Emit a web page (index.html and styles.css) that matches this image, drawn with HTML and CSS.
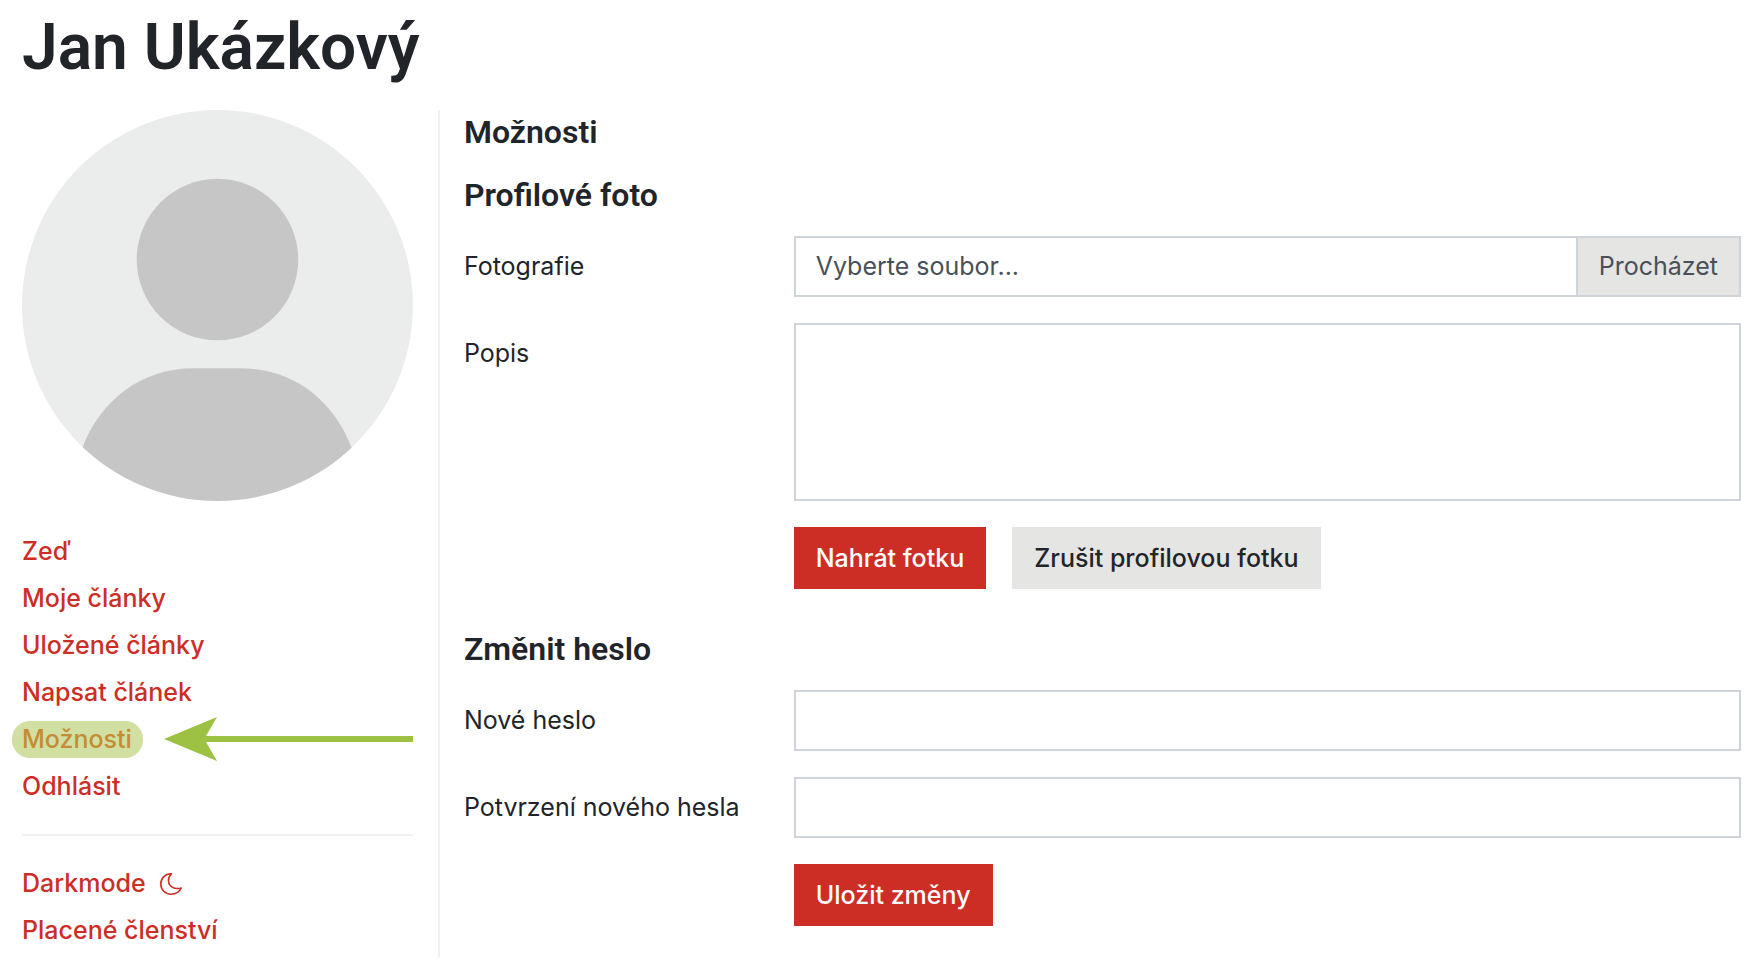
FILE: index.html
```
<!DOCTYPE html>
<html lang="cs">
<head>
    <meta charset="UTF-8">
    <meta name="viewport" content="width=device-width, initial-scale=1.0">
    <title>Jan Ukázkový</title>
    <link rel="stylesheet" href="styles.css">
</head>
<body>
    <h1>Jan Ukázkový</h1>

    <div class="profile">
        <aside class="sidebar">
            <svg class="avatar" viewBox="0 0 392 392" aria-hidden="true">
                <clipPath id="avatarClip"><circle cx="196" cy="196" r="196"/></clipPath>
                <g clip-path="url(#avatarClip)">
                    <rect width="392" height="392" fill="#ebedec"/>
                    <circle cx="196" cy="150" r="81" fill="#c6c6c6"/>
                    <path d="M60 340C78 291 120 259 172 259H220C272 259 313 291 331 340V392H60Z" fill="#c6c6c6"/>
                </g>
            </svg>

            <ul class="menu">
                <li><a href="#">Zeď</a></li>
                <li><a href="#">Moje články</a></li>
                <li><a href="#">Uložené články</a></li>
                <li><a href="#">Napsat článek</a></li>
                <li>
                    <a href="#" class="active">Možnosti</a>
                    <span class="arrow">
                        <svg width="53" height="44" viewBox="0 0 53 44" aria-hidden="true">
                            <path d="M0 22L53 0L42 19H53V25H42L53 44Z" fill="#9dc142"/>
                        </svg>
                        <span class="arrow-line"></span>
                    </span>
                </li>
                <li><a href="#">Odhlásit</a></li>
            </ul>
            <hr>
            <ul class="menu">
                <li>
                    <a href="#">Darkmode
                        <svg class="moon" width="22" height="22" viewBox="0 0 22 22" aria-hidden="true">
                            <path d="M11.5 .8C5.3 .5 .8 5.2 .8 11C.8 16.8 5.4 21.2 11 21.2C15.5 21.2 19.5 18.8 21.2 15C14 17 8.5 13 8.5 7.5C8.5 4.8 9.6 2.3 11.5 .8Z" fill="none" stroke="currentColor" stroke-width="1.6" stroke-linejoin="round"/>
                        </svg>
                    </a>
                </li>
                <li><a href="#">Placené členství</a></li>
            </ul>
        </aside>

        <main class="content">
            <h2>Možnosti</h2>

            <h2>Profilové foto</h2>
            <form class="form">
                <label for="photo">Fotografie</label>
                <div class="file">
                    <input type="file" id="photo" name="photo" accept="image/*">
                    <span class="file-name">Vyberte soubor...</span>
                    <span class="file-browse">Procházet</span>
                </div>
                <label for="description">Popis</label>
                <textarea id="description" name="description"></textarea>
                <div class="buttons">
                    <button type="submit" class="btn btn-primary">Nahrát fotku</button>
                    <button type="button" class="btn">Zrušit profilovou fotku</button>
                </div>
            </form>

            <h2>Změnit heslo</h2>
            <form class="form">
                <label for="password">Nové heslo</label>
                <input type="password" id="password" name="password">
                <label for="passwordConfirm">Potvrzení nového hesla</label>
                <input type="password" id="passwordConfirm" name="passwordConfirm">
                <div class="buttons">
                    <button type="submit" class="btn btn-primary">Uložit změny</button>
                </div>
            </form>
        </main>
    </div>
</body>
</html>
```
FILE: styles.css
```
* {
    box-sizing: border-box;
}
body {
    margin: 0;
    padding: 9px 15px 12px 22px;
    font-family: Inter, sans-serif;
    font-size: 25px;
    line-height: 37px;
    color: #212529;
    background-color: #fff;
}
h1, h2 {
    font-family: Roboto, sans-serif;
    font-weight: 600;
}
h1 {
    margin: 0 0 23px;
    font-size: 64px;
    line-height: 78px;
}
h2 {
    margin: 0 0 19px;
    font-size: 32px;
    line-height: 44px;
}
a {
    color: #cc2e26;
    text-decoration: none;
}
.profile {
    display: grid;
    grid-template-columns: 3fr 10fr;
    column-gap: 25px;
}
.avatar {
    display: block;
    width: 100%;
    margin-bottom: 27px;
}
.menu {
    margin: 0;
    padding: 0;
    list-style: none;
}
.menu li {
    display: flex;
    align-items: center;
    height: 47px;
}
.menu a {
    font-weight: 500;
}
.menu .active {
    margin-left: -10px;
    padding: 0 11px 0 10px;
    border-radius: 18px;
    color: #c48c35;
    background-color: #d1dfa2;
}
.arrow {
    display: flex;
    flex: 1;
    align-items: center;
    margin-left: 21px;
}
.arrow-line {
    flex: 1;
    height: 6px;
    background-color: #9dc142;
}
.moon {
    margin-left: 8px;
    vertical-align: -3px;
}
hr {
    height: 2px;
    margin: 24px 0;
    border: none;
    background-color: #f2f2f2;
}
.content {
    padding-left: 24px;
    border-left: 2px solid #f0f0f0;
}
.form {
    display: grid;
    grid-template-columns: 1fr 3fr;
    gap: 26px 14px;
    margin-bottom: 38px;
}
.form:last-child {
    margin-bottom: 31px;
}
.form label {
    padding: 12px 0;
}
.form input,
.form textarea {
    width: 100%;
    height: 61px;
    padding: 10px 20px;
    border: 2px solid #ced4da;
    border-radius: 0;
    font: inherit;
    color: #495057;
}
.form textarea {
    display: block;
    height: 178px;
    resize: none;
}
.file {
    position: relative;
    display: flex;
    height: 61px;
    border: 2px solid #ced4da;
    line-height: 57px;
    color: #495057;
}
/* the native picker covers the styled one */
.file input {
    position: absolute;
    inset: 0;
    opacity: 0;
}
.file-name {
    flex: 1;
    padding: 0 20px;
}
.file-browse {
    padding: 0 21px;
    border-left: 2px solid #ced4da;
    background-color: #e5e5e4;
}
.buttons {
    display: flex;
    grid-column: 2;
    gap: 26px;
}
.btn {
    height: 62px;
    padding: 0 22px;
    border: none;
    font: inherit;
    font-weight: 500;
    color: #212529;
    background-color: #e5e5e4;
    cursor: pointer;
}
.btn-primary {
    color: #fff;
    background-color: #cc2e26;
}
```
